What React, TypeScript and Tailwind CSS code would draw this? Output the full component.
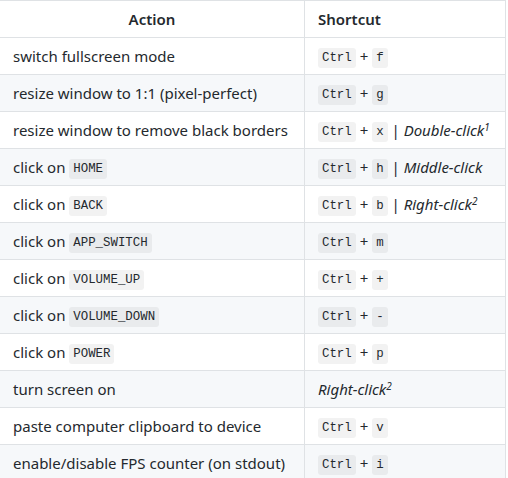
const rows: { action: React.ReactNode; shortcut: React.ReactNode }[] = [];

function Code({ children }: { children: React.ReactNode }) {
  return (
    <code className="rounded-[3px] bg-[rgba(27,31,35,0.06)] px-[4px] py-[3px] align-[1px] font-['Liberation_Mono',monospace] text-[12.4px] leading-none">
      {children}
    </code>
  );
}

function Keys({ k }: { k: string }) {
  return (
    <>
      <Code>Ctrl</Code> + <Code>{k}</Code>
    </>
  );
}

function Click({ label, n }: { label: string; n?: string }) {
  return (
    <em>
      {label}
      {n && <sup className="text-[10px]">{n}</sup>}
    </em>
  );
}

rows.push(
  { action: "switch fullscreen mode", shortcut: <Keys k="f" /> },
  { action: "resize window to 1:1 (pixel-perfect)", shortcut: <Keys k="g" /> },
  {
    action: "resize window to remove black borders",
    shortcut: (
      <>
        <Keys k="x" /> | <Click label="Double-click" n="1" />
      </>
    ),
  },
  {
    action: (
      <>
        click on <Code>HOME</Code>
      </>
    ),
    shortcut: (
      <>
        <Keys k="h" /> | <Click label="Middle-click" />
      </>
    ),
  },
  {
    action: (
      <>
        click on <Code>BACK</Code>
      </>
    ),
    shortcut: (
      <>
        <Keys k="b" /> | <Click label="Right-click" n="2" />
      </>
    ),
  },
  {
    action: (
      <>
        click on <Code>APP_SWITCH</Code>
      </>
    ),
    shortcut: <Keys k="m" />,
  },
  {
    action: (
      <>
        click on <Code>VOLUME_UP</Code>
      </>
    ),
    shortcut: <Keys k="+" />,
  },
  {
    action: (
      <>
        click on <Code>VOLUME_DOWN</Code>
      </>
    ),
    shortcut: <Keys k="-" />,
  },
  {
    action: (
      <>
        click on <Code>POWER</Code>
      </>
    ),
    shortcut: <Keys k="p" />,
  },
  { action: "turn screen on", shortcut: <Click label="Right-click" n="2" /> },
  { action: "paste computer clipboard to device", shortcut: <Keys k="v" /> },
  { action: "enable/disable FPS counter (on stdout)", shortcut: <Keys k="i" /> }
);

export default function App() {
  return (
    <div className="h-[478px] w-[508px] overflow-hidden bg-white font-['Noto_Sans',sans-serif] text-[15px] text-[#24292e]">
      <table className="-ml-px w-[507px] table-fixed border-collapse">
        <colgroup>
          <col className="w-[305px]" />
          <col />
        </colgroup>
        <thead>
          <tr>
            <th className="h-[37px] border border-[#dfe2e5] px-[13px] py-0 text-center font-semibold leading-6">
              Action
            </th>
            <th className="h-[37px] border border-[#dfe2e5] px-[13px] py-0 text-left font-semibold leading-6">
              Shortcut
            </th>
          </tr>
        </thead>
        <tbody>
          {rows.map((r, i) => (
            <tr key={i} className={i % 2 === 1 ? "bg-[#f6f8fa]" : "bg-white"}>
              <td className="h-[37px] whitespace-nowrap border border-[#dfe2e5] px-[13px] py-0 leading-6">
                {r.action}
              </td>
              <td className="h-[37px] whitespace-nowrap border border-[#dfe2e5] px-[13px] py-0 leading-6">
                {r.shortcut}
              </td>
            </tr>
          ))}
        </tbody>
      </table>
    </div>
  );
}
